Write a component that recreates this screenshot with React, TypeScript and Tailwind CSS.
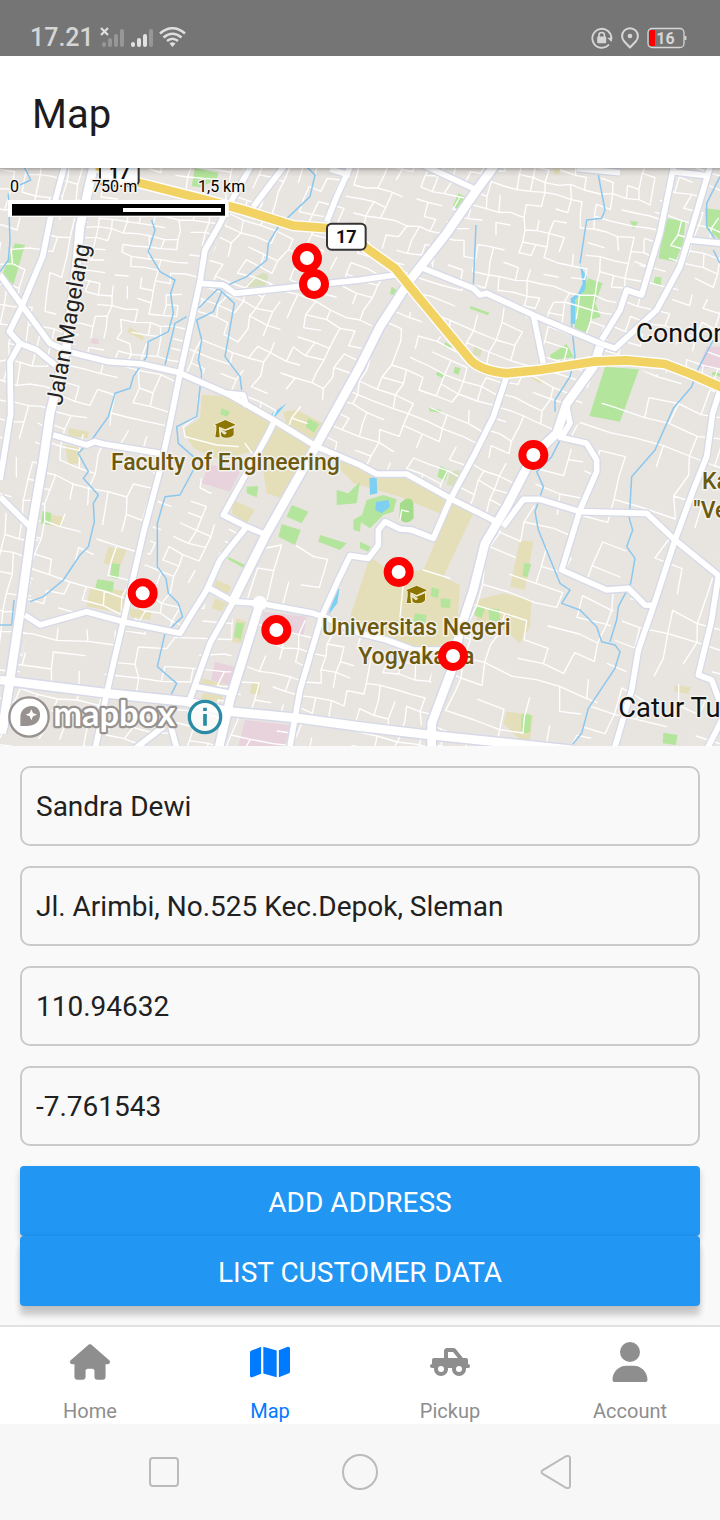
import type { ReactNode } from "react";
import { FaHouse, FaMap, FaTruckPickup, FaUser } from "react-icons/fa6";

/* ---------- Map data. Three map units make one pixel at a 720px wide screen. ---------- */

type Region = { poly: string; box: [number, number, number, number]; tilt: number; slope: number; w: number; h: number };

const regions: Region[] = [
  { poly: "0,24 290,24 160,820 60,1540 0,1560", box: [0, 24, 290, 1560], tilt: 10, slope: 10, w: 40, h: 56 },
  { poly: "285,24 745,24 615,270 535,637 205,575", box: [200, 24, 745, 640], tilt: 10, slope: 9, w: 40, h: 32 },
  { poly: "205,575 535,637 480,930 370,1385 75,1365 135,870", box: [75, 575, 535, 1390], tilt: 14, slope: 17, w: 56, h: 46 },
  { poly: "700,140 990,205 1185,345 950,855 535,637 600,365", box: [535, 140, 1190, 860], tilt: 27, slope: 22, w: 46, h: 34 },
  { poly: "760,24 1480,24 1230,360 990,205 700,140", box: [700, 24, 1480, 360], tilt: 22, slope: 14, w: 38, h: 38 },
  { poly: "1480,24 2020,24 1925,405 1860,400 1800,550 1270,325", box: [1270, 24, 2020, 550], tilt: 10, slope: 12, w: 40, h: 38 },
  { poly: "1270,325 1800,550 1780,603 1520,640 1410,600 1185,345", box: [1185, 325, 1800, 640], tilt: 18, slope: 20, w: 66, h: 44 },
  { poly: "1185,420 1410,600 1520,640 1360,1020 950,855", box: [950, 400, 1520, 1020], tilt: 22, slope: 22, w: 52, h: 36 },
  { poly: "1520,640 1780,603 1490,1085 1360,1020", box: [1360, 600, 1780, 1085], tilt: 22, slope: 22, w: 48, h: 36 },
  { poly: "2020,24 2160,24 2160,680 1860,600 1780,600", box: [1780, 24, 2160, 680], tilt: 18, slope: 16, w: 48, h: 38 },
  { poly: "1690,830 1920,630 2160,690 2160,1758 1730,1758 1900,1290 1690,1230 1760,900", box: [1690, 630, 2160, 1758], tilt: 17, slope: 17, w: 84, h: 64 },
  { poly: "1780,640 1700,850 1770,930 1690,1230 1850,1300 1770,1758 1295,1758 1490,1085", box: [1295, 640, 1850, 1758], tilt: 15, slope: 18, w: 74, h: 54 },
  { poly: "480,990 600,950 690,1070 740,1100 660,1200 540,1420 400,1385", box: [400, 950, 740, 1420], tilt: 24, slope: 22, w: 44, h: 36 },
  { poly: "60,1400 540,1420 660,1280 700,1340 690,1650 30,1560", box: [30, 1280, 700, 1650], tilt: 10, slope: 6, w: 84, h: 46 },
  { poly: "780,1330 965,1370 1295,1500 1295,1720 690,1650", box: [690, 1330, 1295, 1720], tilt: 13, slope: 14, w: 44, h: 42 },
  { poly: "820,1130 1080,1190 965,1370 700,1320", box: [700, 1130, 1080, 1370], tilt: 17, slope: 12, w: 48, h: 84 },
  { poly: "0,1575 690,1665 1295,1730 1295,1758 0,1758", box: [0, 1575, 1295, 1758], tilt: 22, slope: 12, w: 58, h: 40 },
];

function streets({ box: [x0, y0, x1, y1], tilt, slope, w, h }: Region, seed: number): string {
  let state = seed * 7919 + 17;
  const rnd = () => {
    state = (state * 16807) % 2147483647;
    return state / 2147483647;
  };
  const t = Math.tan((tilt * Math.PI) / 180);
  const s = Math.tan((slope * Math.PI) / 180);
  const cols = Math.ceil((x1 - x0) / w) + 2;
  const rows = Math.ceil((y1 - y0) / h) + 2;
  const shift = Math.ceil(((y1 - y0) * t) / w);
  const lift = Math.ceil(((x1 - x0) * s) / h);
  const grid: [number, number][][] = [];
  for (let j = -lift - 1; j < rows; j++) {
    const row: [number, number][] = [];
    for (let i = -1; i < cols + shift; i++) {
      const u = i * w + (rnd() - 0.5) * w * 0.3;
      const v = j * h + (rnd() - 0.5) * h * 0.3;
      row.push([Math.round(x0 + u - v * t), Math.round(y0 + v + u * s)]);
    }
    grid.push(row);
  }
  let d = "";
  grid.forEach((row, j) =>
    row.forEach(([x, y], i) => {
      const right = row[i + 1];
      const below = grid[j + 1]?.[i];
      const a = rnd();
      const b = rnd();
      if (right && a < 0.58) d += `M${x} ${y}L${right[0]} ${right[1]}`;
      if (below && b < 0.5) d += `M${x} ${y}L${below[0]} ${below[1]}`;
    }),
  );
  return d;
}

const streetPaths = regions.map((r, i) => streets(r, i + 3));

const mainRoads = [
  "M285 0L240 200L232 290L200 560L150 760L130 900L95 1105L60 1360L30 1560L5 1720",
  "M1485 15L1430 90L1340 220L1230 360L1140 500L1080 620L950 855L800 1120L700 1320",
  "M1800 560L1780 620L1700 730L1670 820L1600 885L1520 1040L1455 1150L1420 1290L1380 1410L1355 1530L1295 1690L1295 1770",
  "M780 1330L690 1620L655 1770",
  "M0 1560L320 1600L560 1625L690 1655L900 1675L1080 1700L1290 1725L1720 1770",
];

const roads = [
  "M198 0L150 180L128 290L65 440L28 515L60 550L110 570L165 615",
  "M0 345L65 435L150 550L205 575L325 605L425 612L535 637L690 705L820 780L950 860L1080 915L1130 942L1220 942L1360 1020L1490 1085",
  "M60 550L30 605L32 760L10 900L0 960",
  "M0 1010L95 1105",
  "M755 15L690 130L655 200L615 270L600 365L575 480L540 640L510 790L480 930L430 1120L400 1250L370 1385L345 1490L320 1600L285 1770",
  "M855 15L760 140",
  "M1053 15L1010 110L980 185M990 28L1050 45",
  "M600 370L670 375L705 400L1080 360L1185 345",
  "M1270 15L1430 90",
  "M1270 325L1420 385L1440 405L1460 400L1600 465L1800 550L1845 565L1970 450L2040 320L2065 240L2132 15",
  "M2022 15L1980 220L1925 405L1880 390L1860 450L1805 540",
  "M1700 740L1710 790L1685 830",
  "M1675 830L1760 850L1790 900L1790 935L1740 1050L1685 1230L1820 1290L1885 1285L1935 1335L1965 1337",
  "M1520 650L1480 770L1420 890L1350 1020L1300 1135L1235 1110L1200 1107L1155 1085L1135 1110L1135 1155L1105 1195L1050 1187L1010 1270L965 1370L900 1590L868 1770",
  "M1600 465L1630 610",
  "M2160 690L2138 760L2120 890L2080 990L2025 1140L1960 1340L1915 1470L1895 1590L1842 1770",
  "M1510 1100L1570 1018L1620 1018L1740 1055L1940 1060L2025 1140L2160 1250",
  "M2155 1250L2135 1380L2095 1545L2135 1560L2165 1640M2165 1680L2120 1770",
  "M75 1365L120 1395L260 1355L370 1385L540 1420L570 1370L620 1290L660 1200L740 1100",
  "M820 790L800 830L670 1065L740 1100L800 1125",
  "M620 1280L700 1325L780 1330L940 1360L975 1372L1080 1420L1160 1440L1240 1470L1330 1470",
  "M700 1325L630 1450L580 1590L565 1630",
  "M590 1580L690 1600",
  "M160 825L260 855L285 845L310 852L480 880",
  "M680 700L730 705L740 740",
  "M490 1700L400 1770M510 1690L532 1770",
  "M22 1590L15 1700L0 1720",
  "M2065 240L2165 250M1730 25L1860 38M2015 35L2130 48",
];

const waterLines = [
  "M70 15L92 60L60 75M25 100L30 240L25 300L0 335",
  "M455 180L465 210L445 275L480 335L525 360L512 400L520 460L505 515L445 545L440 590L400 650L390 685L345 700L325 770L275 840L235 880L265 935L250 955L295 1005L280 1030L283 1085L265 1160L240 1185L190 1260L130 1310L90 1325",
  "M915 15L945 45L930 110L835 200L805 250L800 300L740 350L650 390L590 450M560 470L525 490L495 615",
  "M665 395L640 455L590 480L605 540L595 600L605 640L590 770L530 800L535 850L580 890L580 930L540 1005L495 1010L472 1090L472 1220L498 1255L505 1300L535 1330L548 1370L495 1420L472 1520L530 1570L508 1615",
  "M660 390L703 430L675 590L720 650L725 690",
  "M1795 45L1815 150L1805 175L1760 180L1740 310M1715 495L1725 590L1710 650L1665 720L1665 755M1680 840L1655 890L1610 935L1630 980L1605 1055L1615 1110L1680 1270L1710 1290L1685 1330L1740 1350L1790 1400L1805 1445L1845 1455L1860 1475L1845 1525L1765 1645L1745 1720L1712 1760",
  "M2160 50L2120 130L2120 200L2160 260M2140 270L2160 310M2140 540L2095 625L2075 680L2020 745L1965 870L1895 950L1888 1075L1898 1110L1880 1160L1905 1195L1892 1270L1855 1340L1850 1380L1830 1445",
  "M1428 195L1420 375M400 1758L480 1700M0 1395L35 1395L42 1320",
];

const shapes: { fill: string; d: string }[] = [
  { fill: "#e5dfb9", d: "M605 705L680 708L815 785L775 870L660 900L580 865L548 810L600 775Z" },
  { fill: "#e5dfb9", d: "M825 800L900 830L940 855L860 1020L800 1000L780 870Z" },
  { fill: "#e5dfb9", d: "M850 755L890 750L970 790L940 850L860 800Z" },
  { fill: "#e5dfb9", d: "M700 1020L765 1050L740 1090L695 1060Z" },
  { fill: "#e5dfb9", d: "M985 890L1080 925L1240 945L1340 1010L1330 1065L1200 1010L1060 970Z" },
  { fill: "#e5dfb9", d: "M1360 1020L1420 1060L1330 1250L1380 1275L1370 1430L1310 1460L1230 1470L1040 1400L1110 1190L1180 1240L1270 1230Z" },
  { fill: "#e5dfb9", d: "M1560 1140L1600 1145L1575 1290L1530 1280ZM1430 1320L1510 1300L1595 1320L1590 1400L1560 1450L1500 1400L1430 1390Z" },
  { fill: "#e5dfb9", d: "M325 1160L380 1170L360 1220L310 1210ZM270 1280L400 1295L380 1360L260 1340ZM390 1345L455 1355L450 1380L390 1370Z" },
  { fill: "#e5dfb9", d: "M195 855L245 865L235 910L205 915ZM205 805L268 815L262 835L205 828ZM155 1065L192 1070L185 1100L150 1098ZM390 500L432 530L428 542L382 515Z" },
  { fill: "#e5dfb9", d: "M650 1260L695 1280L685 1300L640 1285ZM645 1315L680 1330L665 1355L635 1345ZM755 1565L783 1570L778 1605L750 1600ZM710 1375L740 1385L725 1450L695 1445ZM610 1555L680 1575L600 1575ZM610 1600L670 1605L665 1625L600 1620Z" },
  { fill: "#e5dfb9", d: "M1520 1655L1600 1665L1590 1740L1560 1740L1510 1690ZM2025 1575L2072 1582L2065 1602L2022 1595ZM1590 650L1628 655L1620 672ZM1660 25L1685 28L1675 45L1663 42Z" },
  { fill: "#d7dfbd", d: "M790 338L805 345L800 370L790 382L735 380L760 352ZM1425 555L1445 570L1440 590L1415 582ZM1350 935L1380 930L1370 980L1340 975Z" },
  { fill: "#b4e59c", d: "M45 250L75 255L40 375L8 340ZM585 24L655 38L650 60L600 82L575 78Z" },
  { fill: "#b4e59c", d: "M665 745L690 755L682 770L660 762ZM925 775L957 792L942 818L917 800Z" },
  { fill: "#b4e59c", d: "M1375 100L1398 112L1375 148L1358 138ZM1175 380L1190 390L1180 405L1170 403Z" },
  { fill: "#b4e59c", d: "M1765 355L1808 370L1785 430L1802 470L1770 480L1760 518L1725 505L1715 420L1740 400ZM1650 585L1700 552L1722 592L1655 600Z" },
  { fill: "#b4e59c", d: "M1815 620L1917 628L1860 785L1768 768Z" },
  { fill: "#b4e59c", d: "M2005 175L2055 185L2050 250L2025 305L1975 295L1990 220L1985 205ZM2115 145L2160 150L2160 240L2118 205ZM1965 350L1985 352L1982 375L1960 370ZM1890 183L1915 185L1900 208Z" },
  { fill: "#b4e59c", d: "M1412 438L1468 458L1464 466L1410 446ZM1335 545L1360 562L1332 562ZM1365 620L1382 625L1375 645L1360 638ZM1312 634L1335 642L1328 654L1308 645ZM1288 744L1325 750L1320 758L1288 754Z" },
  { fill: "#b4e59c", d: "M740 980L775 978L770 1012L740 1000ZM875 1035L925 1055L905 1090L860 1070ZM845 1092L902 1110L885 1155L835 1130ZM960 1125L1040 1150L1020 1170L955 1145ZM1010 990L1045 1000L1080 965L1070 1030L1010 1035ZM1060 1080L1085 1065L1080 1115L1060 1110Z" },
  { fill: "#b4e59c", d: "M1100 1020L1150 1005L1190 1018L1180 1055L1150 1065L1110 1105L1080 1085Z" },
  { fill: "#a4dc8c", d: "M1212 1020Q1235 1008 1240 1030L1241 1075Q1222 1098 1198 1078L1200 1030Z" },
  { fill: "#b4e59c", d: "M1320 918L1348 930L1335 962L1312 950ZM1080 1145L1112 1160L1105 1175L1080 1165ZM128 1052L155 1060L150 1095L122 1090ZM335 1210L360 1212L355 1258L330 1252ZM292 1258L342 1265L338 1295L285 1288Z" },
  { fill: "#b4e59c", d: "M708 1388L732 1390L722 1438L702 1430ZM685 1190L735 1215L732 1225L684 1198ZM1295 1282L1318 1288L1314 1315L1292 1308ZM1322 1315L1352 1318L1350 1345L1322 1342ZM1245 1360L1280 1365L1275 1390L1240 1385ZM1465 1345L1498 1348L1500 1385L1468 1380Z" },
  { fill: "#b4e59c", d: "M1430 1335L1455 1345L1445 1375L1422 1365ZM1572 1210L1594 1212L1582 1252L1568 1248ZM1565 1665Q1580 1655 1594 1668L1590 1715Q1575 1725 1562 1712ZM1990 1718L2032 1725L2028 1755L1988 1750ZM2138 635L2160 640L2160 650L2135 645Z" },
  { fill: "#e8d3dd", d: "M625 915L725 925L690 995L605 970ZM2120 560L2160 560L2160 625L2095 625ZM790 1355L920 1370L910 1430L785 1400ZM645 1505L703 1520L695 1578L633 1560ZM735 1680L870 1695L855 1758L715 1758ZM275 535L297 538L295 553L273 550Z" },
  { fill: "#7ed0f3", d: "M1740 315L1760 350L1755 390L1725 420L1725 490L1712 495L1712 415L1735 400L1748 370ZM1108 955L1130 950L1132 1000L1110 1005ZM1128 1025L1165 1020L1170 1040L1145 1060L1126 1050ZM860 730L822 775L810 765ZM1020 1275L1012 1330L985 1365L1000 1310Z" },
];

const trunk =
  "M290 18L415 68L600 115L730 150L880 197L990 205L1060 222L1100 265L1185 325L1250 405L1410 598Q1440 632 1520 640L1620 630L1780 605L1880 601L1995 612L2080 645L2170 685";

const markers: [number, number][] = [
  [921, 294],
  [942, 372],
  [1600, 885],
  [1196, 1236],
  [428, 1300],
  [829, 1410],
  [1359, 1488],
];

function Label({ x, y, children, size, color, weight = 400, anchor = "start", rotate }: {
  x: number;
  y: number;
  children: ReactNode;
  size: number;
  color: string;
  weight?: number;
  anchor?: "start" | "middle";
  rotate?: number;
}) {
  return (
    <text
      x={x}
      y={y}
      fontSize={size}
      fontWeight={weight}
      fill={color}
      stroke="#f4f2ee"
      strokeWidth={9}
      strokeLinejoin="round"
      paintOrder="stroke"
      textAnchor={anchor}
      transform={rotate ? `rotate(${rotate} ${x} ${y})` : undefined}
    >
      {children}
    </text>
  );
}

function RoadShield({ x, y }: { x: number; y: number }) {
  return (
    <g>
      <rect x={x - 58} y={y - 39} width={116} height={78} rx={14} fill="#fff" stroke="#333" strokeWidth={6} />
      <text x={x} y={y + 19} fontSize={54} fontWeight={700} fill="#111" textAnchor="middle">
        17
      </text>
    </g>
  );
}

function CampusIcon({ x, y }: { x: number; y: number }) {
  return (
    <path
      transform={`translate(${x} ${y})`}
      d="M-31 -13L1 -27L32 -13L1 1L-18 -7V4L-16 25H-29L-26 4V-11ZM-12 -1L1 6L26 -4V17Q20 26 4 26Q-12 26 -12 17V8L-2 17L6 12Z"
      fill="#8c7500"
      stroke="#f4f0dc"
      strokeWidth={4}
      paintOrder="stroke"
    />
  );
}

function CityMap() {
  return (
    <svg viewBox="0 24 2160 1734" className="block w-full font-[Roboto,'Noto_Sans',sans-serif]" role="img" aria-label="Customer map">
      <defs>
        {regions.map((r, i) => (
          <clipPath id={`area-${i}`} key={i}>
            <polygon points={r.poly} />
          </clipPath>
        ))}
        <linearGradient id="header-shade" x1="0" y1="0" x2="0" y2="1">
          <stop offset="0" stopColor="#000" stopOpacity="0.28" />
          <stop offset="0.4" stopColor="#000" stopOpacity="0.08" />
          <stop offset="1" stopColor="#000" stopOpacity="0" />
        </linearGradient>
      </defs>
      <rect y={24} width={2160} height={1734} fill="#e8e5e1" />
      {shapes.map((s, i) => (
        <path key={i} d={s.d} fill={s.fill} />
      ))}
      <g fill="none" stroke="#fff" strokeWidth={4} strokeLinecap="round">
        {streetPaths.map((d, i) => (
          <g key={i} clipPath={`url(#area-${i})`}>
            <path d={d} />
          </g>
        ))}
        <path d="M595 712L590 770L550 800L555 830L650 855L715 860M735 850L760 885L780 870M1200 1080L1205 1050L1225 1055M1270 1230L1350 1255M1210 1270L1200 1370" />
      </g>
      <g fill="none" stroke="#8cc7ee" strokeWidth={4.5} strokeLinejoin="round">
        {waterLines.map((d) => (
          <path key={d} d={d} />
        ))}
      </g>
      <g fill="none" strokeLinejoin="round">
        <g stroke="#d6d9e7">
          {roads.map((d) => (
            <path key={d} d={d} strokeWidth={25} />
          ))}
          {mainRoads.map((d) => (
            <path key={d} d={d} strokeWidth={35} />
          ))}
        </g>
        <g stroke="#fff">
          {roads.map((d) => (
            <path key={d} d={d} strokeWidth={17} />
          ))}
          {mainRoads.map((d) => (
            <path key={d} d={d} strokeWidth={26} />
          ))}
          <path d={trunk} strokeWidth={34} />
        </g>
        <path d={trunk} stroke="#f1d263" strokeWidth={26} />
      </g>
      <circle cx={779} cy={1330} r={22} fill="#fff" />

      <RoadShield x={358} y={38} />
      <RoadShield x={1039} y={230} />
      <Label x={185} y={738} size={69} color="#222" rotate={-80}>Jalan Magelang</Label>
      <Label x={1907} y={545} size={80} color="#111">Condongcatur</Label>
      <Label x={1855} y={1670} size={82} color="#111">Catur Tunggal</Label>
      <Label x={676} y={930} size={69} color="#6b5a10" weight={500} anchor="middle">Faculty of Engineering</Label>
      <Label x={1249} y={1424} size={69} color="#6b5a10" weight={500} anchor="middle">Universitas Negeri</Label>
      <Label x={1249} y={1511} size={69} color="#6b5a10" weight={500} anchor="middle">Yogyakarta</Label>
      <Label x={2106} y={988} size={69} color="#6b5a10" weight={500}>Kampus</Label>
      <Label x={2080} y={1074} size={69} color="#6b5a10" weight={500}>"Veteran"</Label>
      <CampusIcon x={675} y={807} />
      <CampusIcon x={1249} y={1304} />

      {markers.map(([x, y]) => (
        <circle key={x} cx={x} cy={y} r={33} fill="#fff" stroke="#f00" strokeWidth={24} />
      ))}

      <rect x={24} y={120} width={662} height={48} fill="#fff" />
      <rect x={36} y={132} width={639} height={36} fill="#000" />
      <rect x={24} y={167} width={662} height={4} fill="#fff" />
      <rect x={369} y={144} width={294} height={12} fill="#fff" />
      <Label x={30} y={96} size={48} color="#000">0</Label>
      <Label x={276} y={96} size={48} color="#000">750·m</Label>
      <Label x={594} y={96} size={48} color="#000">1,5 km</Label>

      <circle cx={87} cy={1671} r={59} fill="#fff" stroke="#97928f" strokeWidth={7} />
      <path d="M61 1698V1672C61 1650 77 1638 95 1638C112 1638 122 1652 120 1668C118 1688 102 1698 80 1698Z" fill="#97928f" />
      <path d="M94 1648L99 1659L111 1664L99 1669L94 1681L89 1669L77 1664L89 1659Z" fill="#fff" />
      <text
        x={160}
        y={1697}
        fontSize={103}
        fontWeight={700}
        fill="#fff"
        stroke="#97928f"
        strokeWidth={13}
        strokeLinejoin="round"
        paintOrder="stroke"
        className="font-[Lato,sans-serif]"
      >
        mapbox
      </text>
      <circle cx={615} cy={1671} r={47} fill="#fff" fillOpacity={0.75} stroke="#2a8ba5" strokeWidth={10} />
      <path d="M615 1643V1653M615 1662V1697" stroke="#2a8ba5" strokeWidth={11} />
      <rect y={24} width={2160} height={26} fill="url(#header-shade)" />
    </svg>
  );
}

/* ---------- Screen parts ---------- */

function StatusBar() {
  return (
    <div className="flex h-14 items-end justify-between bg-[#757575] pr-[33px] pl-[30px] text-[#d6d6d6]">
      <div className="flex items-center gap-[6px]">
        <span className="text-[25px] leading-9 font-medium">17.21</span>
        <svg width="86" height="22" viewBox="0 0 86 22" aria-label="Signal and Wi-Fi">
          <g fill="#979797">
            <rect x="2" y="15" width="4" height="5" rx="2" />
            <rect x="8" y="11" width="4" height="9" rx="2" />
            <rect x="14" y="7" width="4" height="13" rx="2" />
            <rect x="20" y="2" width="4" height="18" rx="2" />
            <rect x="49" y="2" width="4" height="18" rx="2" />
          </g>
          <g fill="#e2e2e2">
            <rect x="31" y="15" width="4" height="5" rx="2" />
            <rect x="37" y="11" width="4" height="9" rx="2" />
            <rect x="43" y="7" width="4" height="13" rx="2" />
          </g>
          <path d="M1 1L8 8M8 1L1 8" stroke="#dedede" strokeWidth="2.200" />
          <g fill="none" stroke="#dedede" strokeWidth="2.600">
            <path d="M60 6.500Q72.500 -4 85 6.500" />
            <path d="M63.500 10.500Q72.500 3 81.500 10.500" />
            <path d="M67 14Q72.500 9.500 78 14" />
          </g>
          <path d="M69.500 16.500Q72.500 14 75.500 16.500L72.500 20Z" fill="#dedede" />
        </svg>
      </div>
      <div className="flex h-9 items-center gap-2">
        <svg width="22" height="22" viewBox="0 0 22 22" aria-label="Rotation locked">
          <path d="M18 17.500A9.500 9.500 0 1 1 20.300 12" fill="none" stroke="#d6d6d6" strokeWidth="1.800" />
          <path d="M16.500 11L21.500 10.500L20.500 15Z" fill="#d6d6d6" />
          <rect x="6.200" y="9.500" width="9" height="6.700" rx="1" fill="#d6d6d6" />
          <path d="M8 10V8Q8 5.500 10.700 5.500T13.400 8V10" fill="none" stroke="#d6d6d6" strokeWidth="1.600" />
        </svg>
        <svg width="18" height="22" viewBox="0 0 18 22" aria-label="Location">
          <path d="M9 20.500L3.300 14.500A7.900 7.900 0 1 1 14.700 14.500Z" fill="none" stroke="#d6d6d6" strokeWidth="2" strokeLinejoin="round" />
          <circle cx="9" cy="9" r="2.300" fill="#d6d6d6" />
        </svg>
        <svg width="40" height="22" viewBox="0 0 40 22" aria-label="Battery 16 percent">
          <rect x="1" y="1.500" width="36" height="19" rx="4" fill="none" stroke="#d6d6d6" strokeWidth="1.300" />
          <path d="M4 3H8V19H4Q2 19 2 17V5Q2 3 4 3Z" fill="#f00" />
          <path d="M38.500 9V13" stroke="#d6d6d6" strokeWidth="1.800" />
          <text x="18.500" y="17" fontSize="16" fontWeight="700" fill="#d6d6d6" textAnchor="middle">
            16
          </text>
        </svg>
      </div>
    </div>
  );
}

const fields = [
  { label: "Name", value: "Sandra Dewi" },
  { label: "Address", value: "Jl. Arimbi, No.525 Kec.Depok, Sleman" },
  { label: "Longitude", value: "110.94632" },
  { label: "Latitude", value: "-7.761543" },
];

function AddressForm() {
  return (
    <form className="flex flex-col gap-5 bg-[#f9f9f9] px-5 pt-5 pb-[19px]" onSubmit={(e) => e.preventDefault()}>
      {fields.map((f) => (
        <input
          key={f.label}
          type="text"
          aria-label={f.label}
          defaultValue={f.value}
          className="h-20 w-full rounded-[10px] border-2 border-[#cacaca] bg-transparent px-[14px] text-[28px] text-[#212121] outline-none"
        />
      ))}
      <div className="flex flex-col">
        <button type="submit" className="h-[70px] rounded-[4px] bg-[#2196f3] pt-1 text-[28px] text-white uppercase shadow-[0_4px_6px_rgba(0,0,0,0.2)]">
          Add address
        </button>
        <button type="button" className="h-[70px] rounded-[4px] bg-[#2196f3] pt-1 text-[28px] text-white uppercase shadow-[0_9px_6px_rgba(0,0,0,0.2),0_0_4px_rgba(0,0,0,0.1)]">
          List customer data
        </button>
      </div>
    </form>
  );
}

const tabs = [
  { label: "Home", Icon: FaHouse, active: false },
  { label: "Map", Icon: FaMap, active: true },
  { label: "Pickup", Icon: FaTruckPickup, active: false },
  { label: "Account", Icon: FaUser, active: false },
];

function TabBar() {
  return (
    <nav className="relative grid grid-cols-4 border-t-2 border-[#e2e2e2] bg-white pt-[15px]">
      {tabs.map(({ label, Icon, active }) => (
        <a
          key={label}
          href={`#${label.toLowerCase()}`}
          aria-current={active ? "page" : undefined}
          className={active ? "flex flex-col items-center gap-4 text-[#007aff]" : "flex flex-col items-center gap-4 text-[#8e8e8f]"}
        >
          <Icon className="size-10" />
          <span className="text-[20px] leading-[26px]">{label}</span>
        </a>
      ))}
    </nav>
  );
}

function SystemBar() {
  return (
    <div className="flex h-24 items-center justify-center gap-40 bg-[#f7f7f7]">
      <button type="button" aria-label="Recent apps">
        <svg width="36" height="36" viewBox="0 0 36 36" fill="none" stroke="#bbb" strokeWidth="2">
          <rect x="4" y="4" width="28" height="28" rx="3" />
        </svg>
      </button>
      <button type="button" aria-label="Home screen">
        <svg width="36" height="36" viewBox="0 0 36 36" fill="none" stroke="#bbb" strokeWidth="2">
          <circle cx="18" cy="18" r="17" />
        </svg>
      </button>
      <button type="button" aria-label="Back">
        <svg width="36" height="36" viewBox="0 0 36 36" fill="none" stroke="#bbb" strokeWidth="2">
          <path d="M4.500 16.300L28 2.200Q32 1 32 4.500V31.500Q32 35 28 33.800L4.500 19.700Q2.500 18 4.500 16.300Z" />
        </svg>
      </button>
    </div>
  );
}

export default function App() {
  return (
    <div className="flex min-h-screen flex-col bg-[#f9f9f9] font-[Roboto,'Noto_Sans',sans-serif]">
      <StatusBar />
      <header className="flex h-28 items-center bg-white px-8 pt-[6px]">
        <h1 className="text-[40px] text-[#1c1c1e]">Map</h1>
      </header>
      <main className="flex flex-col">
        <CityMap />
        <AddressForm />
      </main>
      <TabBar />
      <SystemBar />
    </div>
  );
}
